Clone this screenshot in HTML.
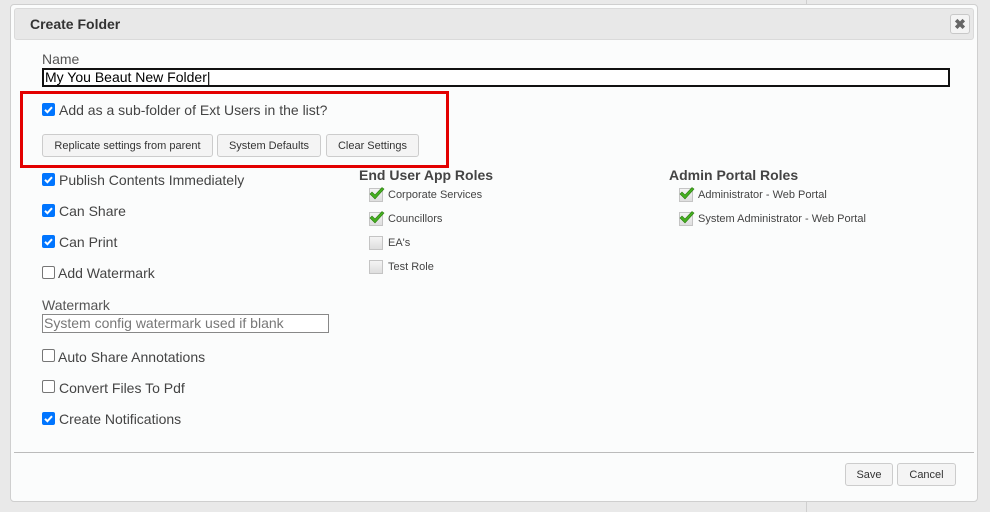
<!DOCTYPE html>
<html><head><meta charset="utf-8"><style>
*{box-sizing:border-box;margin:0;padding:0}
body{width:990px;height:512px;background:#e9e9e9;font-family:"Liberation Sans",Arial,sans-serif;position:relative;overflow:hidden;color:#444}
.a{position:absolute}
.vl{left:806px;top:0;width:1px;height:512px;background:#cfcfcf}
.dlg{left:10px;top:4px;width:968px;height:498px;background:#fbfcfc;border:1px solid #cfcfcf;border-radius:4px}
.hdr{left:14px;top:8px;width:960px;height:32px;background:#e8e8e8;border:1px solid #dadada;border-radius:3px}
.hdr b{position:absolute;left:15px;top:7px;font-size:14px;color:#333}
.x{left:950px;top:14px;width:20px;height:20px;border:1px solid #c8c8c8;border-radius:3px;background:#f4f4f4;font-size:14px;font-weight:bold;color:#666;text-align:center;line-height:18px}
.lbl{font-size:14px;color:#555}
.inp{border:1px solid #888;background:#fff;font-size:14px}
.cb{width:13px;height:13px;border-radius:2px}
.off{border:1px solid #767676;background:#fff}
.t{font-size:14px;color:#444}
.btn{height:23px;border:1px solid #ccc;border-radius:3px;background:#f4f4f4;font-size:11px;color:#333;text-align:center;line-height:22px}
.rh{font-size:14px;font-weight:bold;color:#444}
.ri{font-size:11px;color:#444}
.ic{width:14px;height:14px;border:1px solid #c4c4c4;background:linear-gradient(#f4f4f4,#dedede)}
</style></head><body>
<div class="a vl"></div>
<div class="a dlg"></div>
<div class="a hdr"><b>Create Folder</b></div>
<div class="a x">✖</div>

<div class="a lbl" style="left:42px;top:51px">Name</div>
<div class="a inp" style="left:42px;top:68px;width:908px;height:19px;border:2px solid #111;padding-left:1px;line-height:15px;color:#000">My You Beaut New Folder|</div>

<div class="a" style="left:20px;top:91px;width:429px;height:77px;border:3px solid #e30000"></div>
<svg width="0" height="0" style="position:absolute"><defs><symbol id="ck" viewBox="0 0 13 13"><rect width="13" height="13" rx="2" fill="#0075ff"/><path d="M3 6.8l2.4 2.4 4.6-5" stroke="#fff" stroke-width="2" fill="none"/></symbol>
<symbol id="gk" viewBox="0 0 16 16"><path d="M1 8l5 5 9-10-2-1.5-7 7.5-3-3z" fill="#44b020" stroke="#2d7a10" stroke-width=".6"/></symbol></defs></svg>

<svg class="a" style="left:42px;top:103px" width="13" height="13"><use href="#ck"/></svg>
<div class="a t" style="left:59px;top:102px">Add as a sub-folder of Ext Users in the list?</div>
<div class="a btn" style="left:42px;top:134px;width:171px">Replicate settings from parent</div>
<div class="a btn" style="left:217px;top:134px;width:104px">System Defaults</div>
<div class="a btn" style="left:326px;top:134px;width:93px">Clear Settings</div>

<svg class="a" style="left:42px;top:173px" width="13" height="13"><use href="#ck"/></svg>
<div class="a t" style="left:59px;top:172px">Publish Contents Immediately</div>
<svg class="a" style="left:42px;top:204px" width="13" height="13"><use href="#ck"/></svg>
<div class="a t" style="left:59px;top:203px">Can Share</div>
<svg class="a" style="left:42px;top:235px" width="13" height="13"><use href="#ck"/></svg>
<div class="a t" style="left:59px;top:234px">Can Print</div>
<div class="a cb off" style="left:42px;top:266px"></div>
<div class="a t" style="left:58px;top:265px">Add Watermark</div>
<div class="a lbl" style="left:42px;top:297px">Watermark</div>
<div class="a inp" style="left:42px;top:314px;width:287px;height:19px;color:#777;padding-left:1px;line-height:17px">System config watermark used if blank</div>
<div class="a cb off" style="left:42px;top:349px"></div>
<div class="a t" style="left:58px;top:349px">Auto Share Annotations</div>
<div class="a cb off" style="left:42px;top:380px"></div>
<div class="a t" style="left:59px;top:380px">Convert Files To Pdf</div>
<svg class="a" style="left:42px;top:412px" width="13" height="13"><use href="#ck"/></svg>
<div class="a t" style="left:59px;top:411px">Create Notifications</div>

<div class="a rh" style="left:359px;top:167px">End User App Roles</div>
<div class="a ic" style="left:369px;top:188px"></div><svg class="a" style="left:369px;top:186px" width="16" height="16"><use href="#gk"/></svg>
<div class="a ri" style="left:388px;top:189px">Corporate Services</div>
<div class="a ic" style="left:369px;top:212px"></div><svg class="a" style="left:369px;top:210px" width="16" height="16"><use href="#gk"/></svg>
<div class="a ri" style="left:388px;top:213px">Councillors</div>
<div class="a ic" style="left:369px;top:236px"></div>
<div class="a ri" style="left:388px;top:237px">EA's</div>
<div class="a ic" style="left:369px;top:260px"></div>
<div class="a ri" style="left:388px;top:261px">Test Role</div>

<div class="a rh" style="left:669px;top:167px">Admin Portal Roles</div>
<div class="a ic" style="left:679px;top:188px"></div><svg class="a" style="left:679px;top:186px" width="16" height="16"><use href="#gk"/></svg>
<div class="a ri" style="left:698px;top:189px">Administrator - Web Portal</div>
<div class="a ic" style="left:679px;top:212px"></div><svg class="a" style="left:679px;top:210px" width="16" height="16"><use href="#gk"/></svg>
<div class="a ri" style="left:698px;top:213px">System Administrator - Web Portal</div>

<div class="a" style="left:14px;top:452px;width:960px;height:1px;background:#bbb"></div>
<div class="a btn" style="left:845px;top:463px;width:48px">Save</div>
<div class="a btn" style="left:897px;top:463px;width:59px">Cancel</div>
</body></html>
